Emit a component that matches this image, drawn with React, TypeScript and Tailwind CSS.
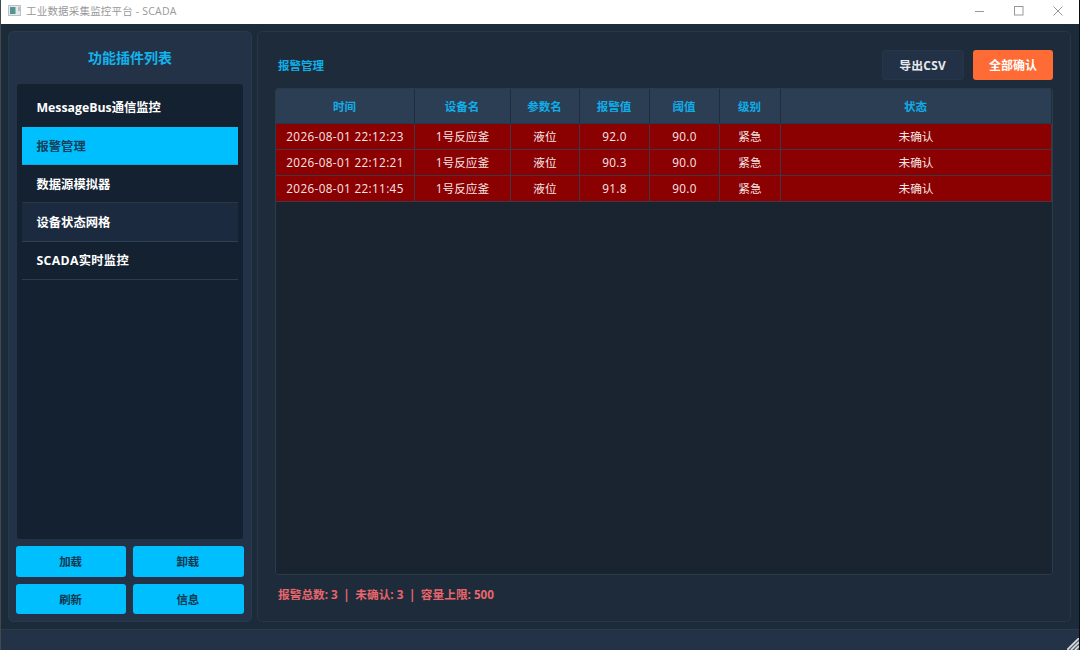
import React from "react";

const plugins = [
  { name: "MessageBus通信监控", look: "border-[#142131] text-white" },
  { name: "报警管理", look: "border-[#1d9fd0] bg-[#00bfff] text-[#16405a]" },
  { name: "数据源模拟器", look: "border-[#273746] text-white" },
  { name: "设备状态网格", look: "border-[#2c4050] bg-[#1b2a3e] text-white" },
  { name: "SCADA实时监控", look: "border-[#2c3e4d] text-white tracking-[0.3px]" },
];

const actions = ["加载", "卸载", "刷新", "信息"];
const headers = ["时间", "设备名", "参数名", "报警值", "阈值", "级别", "状态"];
const alarms = [
  ["2026-08-01 22:12:23", "1号反应釜", "液位", "92.0", "90.0", "紧急", "未确认"],
  ["2026-08-01 22:12:21", "1号反应釜", "液位", "90.3", "90.0", "紧急", "未确认"],
  ["2026-08-01 22:11:45", "1号反应釜", "液位", "91.8", "90.0", "紧急", "未确认"],
];
const columns = "grid grid-cols-[139px_96px_69px_70px_70px_61px_1fr]";

function TitleBar() {
  return (
    <header className="flex h-6 shrink-0 items-center bg-white pl-[7px] pr-[16px] text-[#999]">
      <svg width="13" height="11" viewBox="0 0 13 11" className="mb-[3px]">
        <defs>
          <linearGradient id="app" x1="0" y1="0" x2="0.6" y2="1">
            <stop offset="0" stopColor="#5a8fa8" />
            <stop offset="1" stopColor="#4f9a7c" />
          </linearGradient>
        </defs>
        <rect x="0.5" y="0.5" width="12" height="10" fill="#e4e8ea" stroke="#b9c2c8" />
        <rect x="2" y="2" width="5.5" height="7" fill="url(#app)" />
        <path d="M11 2v4" stroke="#8d969b" />
      </svg>
      <span className="mb-[2px] ml-[5px] text-[10.5px] leading-none tracking-[0.19px]">工业数据采集监控平台 - SCADA</span>
      <div className="mb-[3px] ml-auto flex items-center gap-[29px]">
        <svg width="10" height="10" viewBox="0 0 10 10" stroke="#999" fill="none"><path d="M0 5.5h9" /></svg>
        <svg width="10" height="10" viewBox="0 0 10 10" stroke="#999" fill="none"><rect x="0.5" y="0.5" width="8.5" height="8.5" /></svg>
        <svg width="10" height="10" viewBox="0 0 10 10" stroke="#999" fill="none"><path d="M0.5 0.5l9 9M9.5 0.5l-9 9" /></svg>
      </div>
    </header>
  );
}

function Sidebar() {
  return (
    <aside className="flex w-[244px] shrink-0 flex-col rounded-[5px] border border-[#293a4b] bg-[#233246] px-[7px] pb-[7px]">
      <h1 className="flex h-[52px] items-center justify-center pb-[2px] text-[14px] font-semibold text-[#12b4ee]">功能插件列表</h1>
      <ul className="mx-px flex h-[455px] flex-col rounded-[3px] bg-[#142131] px-[5px] pt-[4.6px]">
        {plugins.map((p) => (
          <li key={p.name} className={`flex h-[38.25px] shrink-0 items-center border-b pl-[14.5px] pt-[2.6px] text-[12.3px] font-bold ${p.look}`}>
            {p.name}
          </li>
        ))}
      </ul>
      <div className="mr-[0.5px] mt-[7px] grid grid-cols-2 gap-[7px]">
        {actions.map((a) => (
          <button key={a} className="h-[30.5px] rounded-[3px] bg-[#00bfff] pr-px pt-px text-[11.5px] font-bold text-[#123850]">
            {a}
          </button>
        ))}
      </div>
    </aside>
  );
}

function AlarmPanel() {
  return (
    <main className="flex min-w-0 flex-1 flex-col rounded-[5px] border border-[#263746] bg-[#1e2b3a] pl-[17px] pr-[17px]">
      <div className="flex h-[56px] items-end pb-[8.5px]">
        <h2 className="mb-[5px] ml-[3px] text-[11.5px] font-bold leading-[18px] text-[#0fb0e8]">报警管理</h2>
        <button className="ml-auto h-[29.5px] w-[82px] rounded-[3px] border border-[#25364a] bg-[#223145] pr-px pt-[2px] text-[11.9px] font-bold tracking-[0.2px] text-[#e6e9ec]">导出CSV</button>
        <button className="ml-[9px] h-[29.5px] w-[80px] rounded-[3px] bg-[#ff6b35] pt-[2px] text-[12px] font-bold text-white">全部确认</button>
      </div>
      <section className="h-[487px] overflow-hidden rounded-[3px] border border-[#2a3b4a] bg-[#1a2431]">
        <div className={`${columns} h-[35px] bg-[#2c3e54]`}>
          {headers.map((h) => (
            <div key={h} className="flex items-center justify-center border-b border-r border-b-[#26394a] border-r-[#1f2e3f] pr-px pt-px text-[11.5px] font-bold text-[#10ade8]">{h}</div>
          ))}
        </div>
        {alarms.map((row) => (
          <div key={row[0]} className={`${columns} h-[26px] bg-[#8b0000]`}>
            {row.map((cell, i) => (
              <div
                key={i}
                className={`flex items-center justify-center whitespace-nowrap border-b border-r border-[#443444] pt-px text-[11.7px] text-[#f7e7e7] ${i === 0 ? "tracking-[0.38px]" : i === 3 || i === 4 ? "tracking-[0.3px]" : ""}`}
              >
                {cell}
              </div>
            ))}
          </div>
        ))}
      </section>
      <p className="ml-[3px] mt-[10px] flex text-[11.7px] font-bold leading-[18px] text-[#e8666c]">
        <span>报警总数: 3</span>
        <span className="mx-[5.5px]">|</span>
        <span>未确认: 3</span>
        <span className="mx-[5.5px]">|</span>
        <span>容量上限: 500</span>
      </p>
    </main>
  );
}

export default function App() {
  return (
    <div className="relative flex h-[650px] w-[1080px] flex-col overflow-hidden border-l border-r border-l-[#43484c] border-r-[#090e14] bg-[#1c2b3a] font-['Open_Sans','Noto_Sans_CJK_SC',sans-serif]">
      <TitleBar />
      <div className="flex h-[605px] shrink-0 gap-[5px] pb-[7px] pl-[7px] pr-[8px] pt-[7px]">
        <Sidebar />
        <AlarmPanel />
      </div>
      <footer className="flex flex-1 items-end justify-end border-t border-[#2a3c4c] bg-[#233247]">
        <svg width="12" height="12" viewBox="0 0 12 12" fill="none">
          <path d="M12 0v12H0z" fill="#596370" />
          <path d="M0 12L12 0M4 12l8-8M8 12l4-4" stroke="#d9dde2" strokeWidth="1.6" />
        </svg>
      </footer>
    </div>
  );
}
